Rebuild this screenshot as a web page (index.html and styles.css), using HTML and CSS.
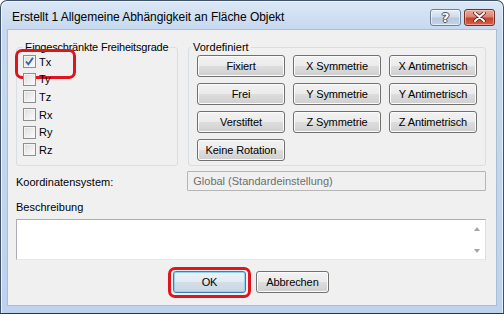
FILE: index.html
```html
<!DOCTYPE html>
<html lang="de">
<head>
<meta charset="utf-8">
<title>Dialog</title>
<link rel="stylesheet" href="styles.css">
</head>
<body>
<div class="window">
  <div class="titlebar">
    <span class="title">Erstellt 1 Allgemeine Abhängigkeit an Fläche Objekt</span>
    <div class="caption-btns">
      <span class="cbtn help">?</span>
      <span class="cbtn close">
        <svg width="13" height="10" viewBox="0 0 13 10"><path d="M2 1 L11 9 M11 1 L2 9" stroke="#5a1d14" stroke-width="3.6" stroke-linecap="round"/><path d="M2 1 L11 9 M11 1 L2 9" stroke="#ffffff" stroke-width="2" stroke-linecap="round"/></svg>
      </span>
    </div>
  </div>
  <div class="client">
    <div class="groups">
      <fieldset class="group dof">
        <legend>Eingeschränkte Freiheitsgrade</legend>
        <div class="checks">
          <label class="check marked"><span class="box"><svg width="11" height="11" viewBox="0 0 11 11"><path d="M2 5.5 L4.4 8.3 L9 1.8" fill="none" stroke="#3d5fa0" stroke-width="1.9"/></svg></span>Tx</label>
          <label class="check"><span class="box"></span>Ty</label>
          <label class="check"><span class="box"></span>Tz</label>
          <label class="check"><span class="box"></span>Rx</label>
          <label class="check"><span class="box"></span>Ry</label>
          <label class="check"><span class="box"></span>Rz</label>
        </div>
      </fieldset>
      <fieldset class="group presets">
        <legend>Vordefiniert</legend>
        <div class="preset-grid">
          <button class="btn">Fixiert</button>
          <button class="btn">X Symmetrie</button>
          <button class="btn">X Antimetrisch</button>
          <button class="btn">Frei</button>
          <button class="btn">Y Symmetrie</button>
          <button class="btn">Y Antimetrisch</button>
          <button class="btn">Verstiftet</button>
          <button class="btn">Z Symmetrie</button>
          <button class="btn">Z Antimetrisch</button>
          <button class="btn">Keine Rotation</button>
        </div>
      </fieldset>
    </div>
    <div class="coord-row">
      <span class="coord-label">Koordinatensystem:</span>
      <div class="field">Global (Standardeinstellung)</div>
    </div>
    <div class="desc-label">Beschreibung</div>
    <div class="memo">
      <div class="memo-text"></div>
      <div class="vscroll"><span class="arrow up"></span><span class="arrow down"></span></div>
    </div>
    <div class="actions">
      <button class="btn action default">OK</button>
      <button class="btn action">Abbrechen</button>
    </div>
  </div>
</div>
</body>
</html>
```
FILE: styles.css
```css
* { box-sizing: border-box; }
html, body { margin: 0; padding: 0; }
body {
  width: 504px;
  height: 314px;
  background: #ffffff;
  font-family: "Liberation Sans", Arial, sans-serif;
  font-size: 11px;
  color: #000;
  overflow: hidden;
}
.window {
  width: 504px;
  height: 314px;
  border: 1px solid #3f5268;
  border-bottom-color: #1f3a44;
  border-radius: 7px 7px 0 0;
  background: linear-gradient(#dbe7f5 0px, #c6d9ef 29px, #bdd3ed 100%);
  padding: 0 7px 8px 7px;
  display: flex;
  flex-direction: column;
  box-shadow: inset 1px 1px 0 #eef4fb, inset -1px 0 0 #e4edf8;
}
.titlebar {
  height: 29px;
  display: flex;
  align-items: center;
  justify-content: space-between;
}
.title {
  font-size: 12px;
  padding-left: 4px;
  padding-top: 2px;
  color: #000;
  letter-spacing: -0.05px;
}
.caption-btns {
  display: flex;
  gap: 3px;
  padding-top: 3px;
  margin-right: 1px;
}
.cbtn {
  width: 31px;
  height: 17px;
  border-radius: 3px;
  display: flex;
  align-items: center;
  justify-content: center;
}
.help {
  border: 1px solid #6e8098;
  background: linear-gradient(#e6eef8 0%, #cfdcec 45%, #b7c9df 55%, #c3d4e8 100%);
  box-shadow: inset 0 0 0 1px rgba(255,255,255,0.55);
  color: #ffffff;
  font-family: "DejaVu Sans", sans-serif;
  font-weight: bold;
  font-size: 13px;
  line-height: 15px;
  text-shadow: 0 0 1px #3d4e63, 0 0 1px #3d4e63, 1px 0 0 #4b5c72, -1px 0 0 #4b5c72, 0 1px 0 #4b5c72, 0 -1px 0 #4b5c72;
}
.close {
  border: 1px solid #7a2e22;
  background: linear-gradient(#ebab9c 0%, #d98672 45%, #c4432c 55%, #d4624b 100%);
  box-shadow: inset 0 0 0 1px rgba(255,220,210,0.5);
}
.client {
  flex: 1;
  background: #f0f0f0;
  box-shadow: 0 0 0 1px #a9bdd6;
  padding: 11px 10px 0 8px;
  display: flex;
  flex-direction: column;
}
.groups {
  display: flex;
  gap: 10px;
}
.group {
  margin: 0;
  height: 125px;
  border: 1px solid #d5dfe5;
  border-radius: 3px;
  min-width: 0;
}
.group legend {
  font-size: 11px;
  line-height: 12px;
  padding: 0 2px;
  white-space: nowrap;
}
.dof {
  width: 162px;
  padding: 0 6px;
}
.dof legend { letter-spacing: -0.2px; }
.presets {
  flex: 1;
  padding: 2px 8px 0 8px;
}
.presets legend { margin-left: -6px; }
.checks {
  display: grid;
  grid-template-rows: repeat(6, 17.6px);
}
.check {
  position: relative;
  display: flex;
  align-items: center;
  gap: 3px;
  font-size: 11px;
}
.box {
  width: 13px;
  height: 13px;
  border: 1px solid #8e8f8f;
  background: linear-gradient(135deg, #dcdcdc 0%, #f0f0f0 60%, #fdfdfd 100%);
  box-shadow: inset 0 0 0 1px #f4f4f4;
  display: flex;
  align-items: center;
  justify-content: center;
}
.marked::after {
  content: "";
  position: absolute;
  left: -8px;
  top: -4px;
  width: 55px;
  height: 24px;
  border: 3px solid #e0141c;
  border-radius: 7px;
}
.preset-grid {
  display: grid;
  grid-template-columns: repeat(3, 88px);
  grid-auto-rows: 22px;
  column-gap: 8px;
  row-gap: 6px;
}
.btn {
  font-family: "Liberation Sans", Arial, sans-serif;
  font-size: 11px;
  color: #000;
  border: 1px solid #707070;
  border-radius: 3px;
  background: linear-gradient(#f2f2f2 0%, #ebebeb 48%, #dddddd 52%, #cfcfcf 100%);
  box-shadow: inset 0 0 0 1px #fbfbfb;
  padding: 0;
  height: 22px;
  letter-spacing: -0.1px;
}
.coord-row {
  margin-top: 5px;
  display: flex;
  align-items: center;
  height: 20px;
}
.coord-label {
  width: 172px;
  padding-top: 2px;
}
.field {
  width: 300px;
  height: 20px;
  border: 1px solid #b5b5b5;
  border-radius: 1px;
  background: #f0f0f0;
  color: #6d6d6d;
  padding-left: 5px;
  line-height: 18px;
}
.desc-label {
  margin-top: 10px;
  line-height: 13px;
}
.memo {
  margin-top: 5px;
  width: 470px;
  height: 41px;
  border: 1px solid #abadb3;
  border-right-color: #dbdfe6;
  border-bottom-color: #e3e9ef;
  background: #ffffff;
  display: flex;
}
.memo-text { flex: 1; }
.vscroll {
  width: 17px;
  display: flex;
  flex-direction: column;
  justify-content: space-between;
  align-items: center;
  padding: 7px 0 6px 0;
}
.arrow {
  width: 0;
  height: 0;
  border-left: 3.5px solid transparent;
  border-right: 3.5px solid transparent;
}
.arrow.up { border-bottom: 4px solid #a3a3a3; }
.arrow.down { border-top: 4px solid #a3a3a3; }
.actions {
  margin-top: 11px;
  display: flex;
  justify-content: center;
  gap: 10px;
}
.action {
  width: 73px;
  height: 22px;
}
.default {
  position: relative;
  border-color: #3c7fb1;
  background: linear-gradient(#eef3f8 0%, #e3eaf2 48%, #d4dee8 52%, #c9d6e3 100%);
  box-shadow: inset 0 0 0 1px #8fd3f5;
}
.default::after {
  content: "";
  position: absolute;
  left: -6px;
  top: -5px;
  right: -6px;
  bottom: -6px;
  border: 3px solid #e0141c;
  border-radius: 7px;
}
```
